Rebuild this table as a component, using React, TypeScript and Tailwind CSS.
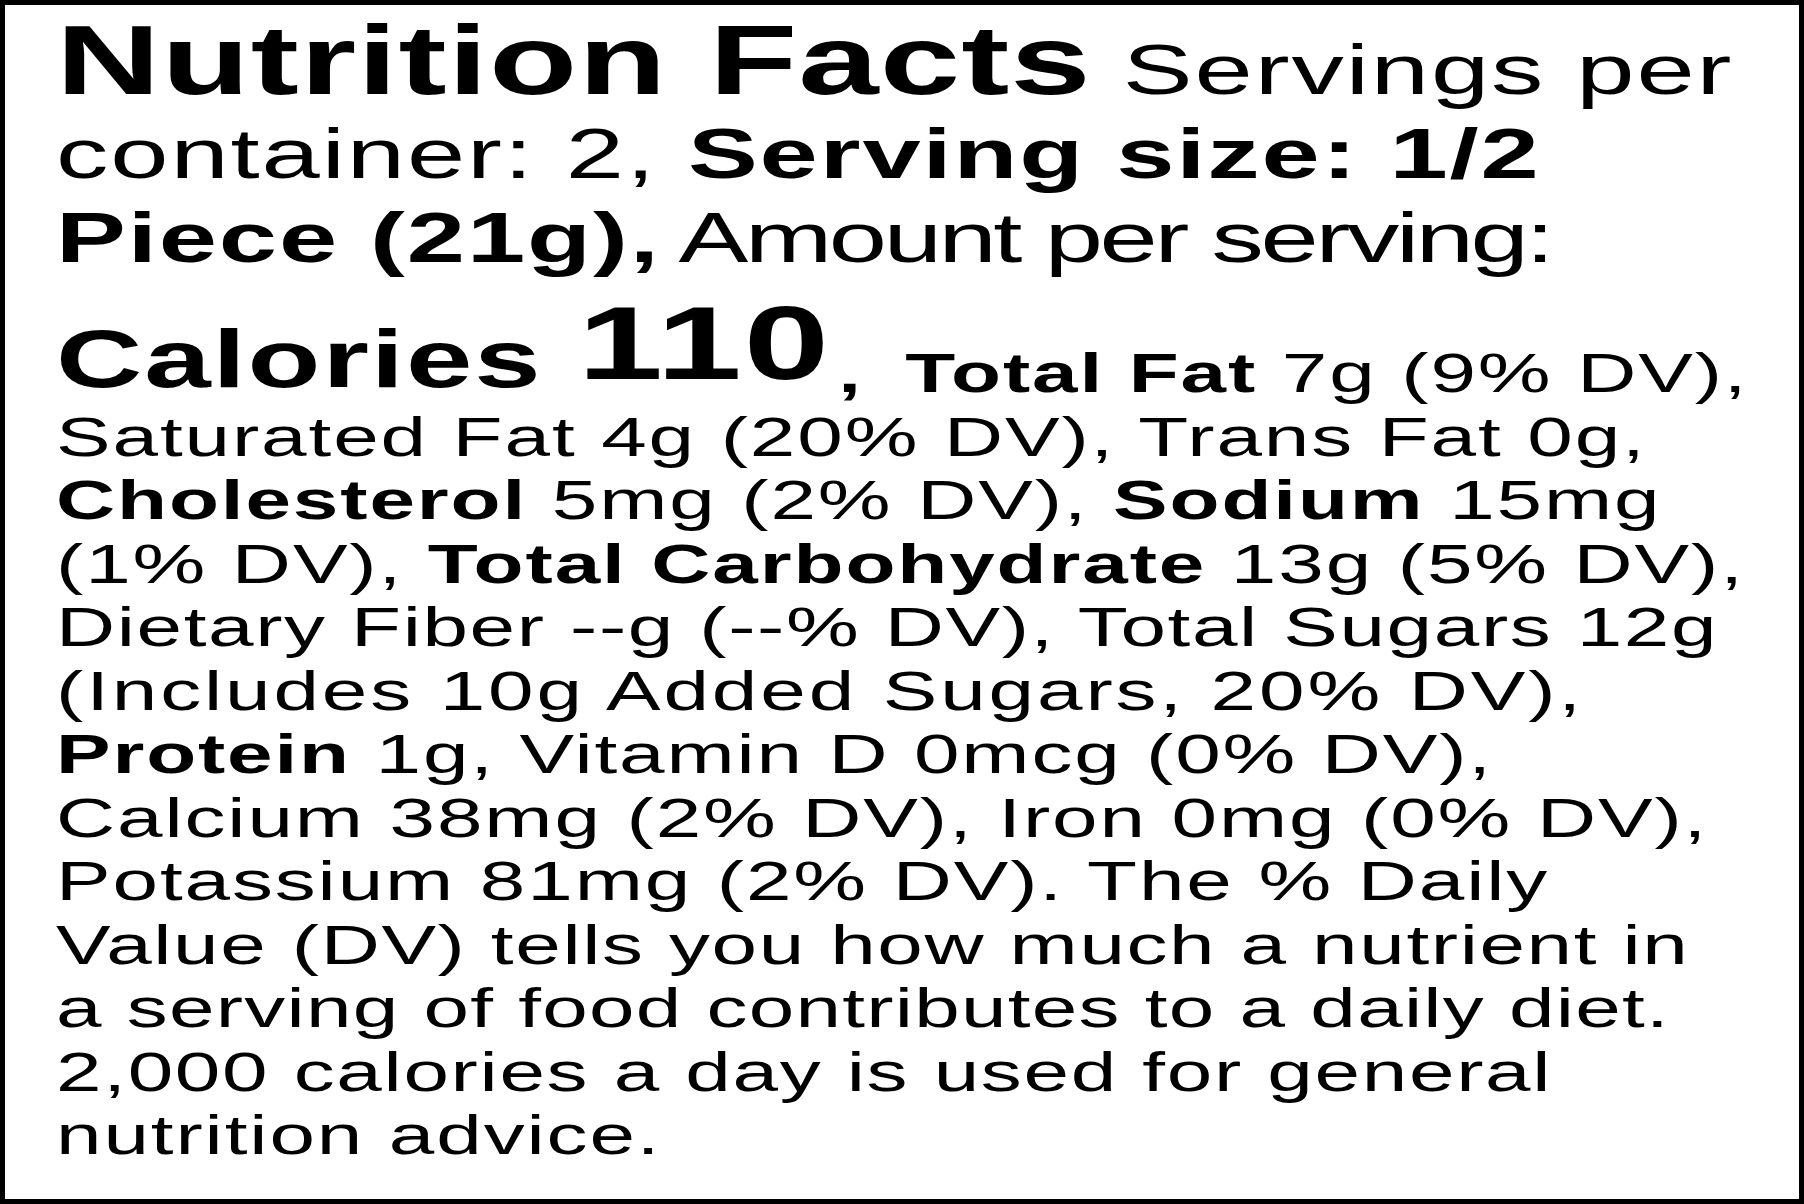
import React from "react";

function B({ children }: { children: React.ReactNode }) {
  return <span className="font-bold">{children}</span>;
}

function HeadLine({ children }: { children: React.ReactNode }) {
  return <div className="h-[84px] text-[71px] leading-[84px]">{children}</div>;
}

function Line({ children, className = "" }: { children: React.ReactNode; className?: string }) {
  return <div className={"h-[63.5px] text-[55.5px] leading-[63.5px] " + className}>{children}</div>;
}

export default function App() {
  return (
    <div className="w-[1804px] h-[1204px] overflow-hidden border-[5px] border-black bg-white pl-[51px] pt-[23px]">
      <div className="origin-top-left scale-x-[1.475] whitespace-nowrap font-['Liberation_Sans',Arial,sans-serif] tracking-[1.28px] text-black">
        <HeadLine>
          <span className="text-[98px] font-bold leading-[0] tracking-[0.72px]">Nutrition Facts</span> Servings per
        </HeadLine>
        <HeadLine>
          container: 2, <B>Serving size: 1/2</B>
        </HeadLine>
        <HeadLine>
          <B>Piece (21g),</B> <span className="-ml-[9px] tracking-[-2.3px]">Amount per serving:</span>
        </HeadLine>
        <div className="mt-[62px]">
          <Line>
            <span className="text-[81px] font-bold leading-[0] align-[5px]">Calories </span>
            <span className="text-[104px] font-bold leading-[0] align-[13px]">110</span>
            <span className="ml-[5px] font-bold">,</span> <span className="ml-[12px] font-bold">Total Fat</span> 7g (9% DV),
          </Line>
          <Line>Saturated Fat 4g (20% DV), Trans Fat 0g,</Line>
          <Line>
            <B>Cholesterol</B> 5mg (2% DV), <B>Sodium</B> 15mg
          </Line>
          <Line>
            (1% DV), <B>Total Carbohydrate</B> 13g (5% DV),
          </Line>
          <Line className="tracking-[1.1px]">Dietary Fiber --g (--% DV), Total Sugars 12g</Line>
          <Line className="tracking-[1.95px]">(Includes 10g Added Sugars, 20% DV),</Line>
          <Line className="tracking-[1.25px]">
            <B>Protein</B> 1g, Vitamin D 0mcg (0% DV),
          </Line>
          <Line>Calcium 38mg (2% DV), Iron 0mg (0% DV),</Line>
          <Line>Potassium 81mg (2% DV). The % Daily</Line>
          <Line className="tracking-[1.1px]">Value (DV) tells you how much a nutrient in</Line>
          <Line className="tracking-[0.85px]">a serving of food contributes to a daily diet.</Line>
          <Line className="tracking-[1.14px]">2,000 calories a day is used for general</Line>
          <Line>nutrition advice.</Line>
        </div>
      </div>
    </div>
  );
}
